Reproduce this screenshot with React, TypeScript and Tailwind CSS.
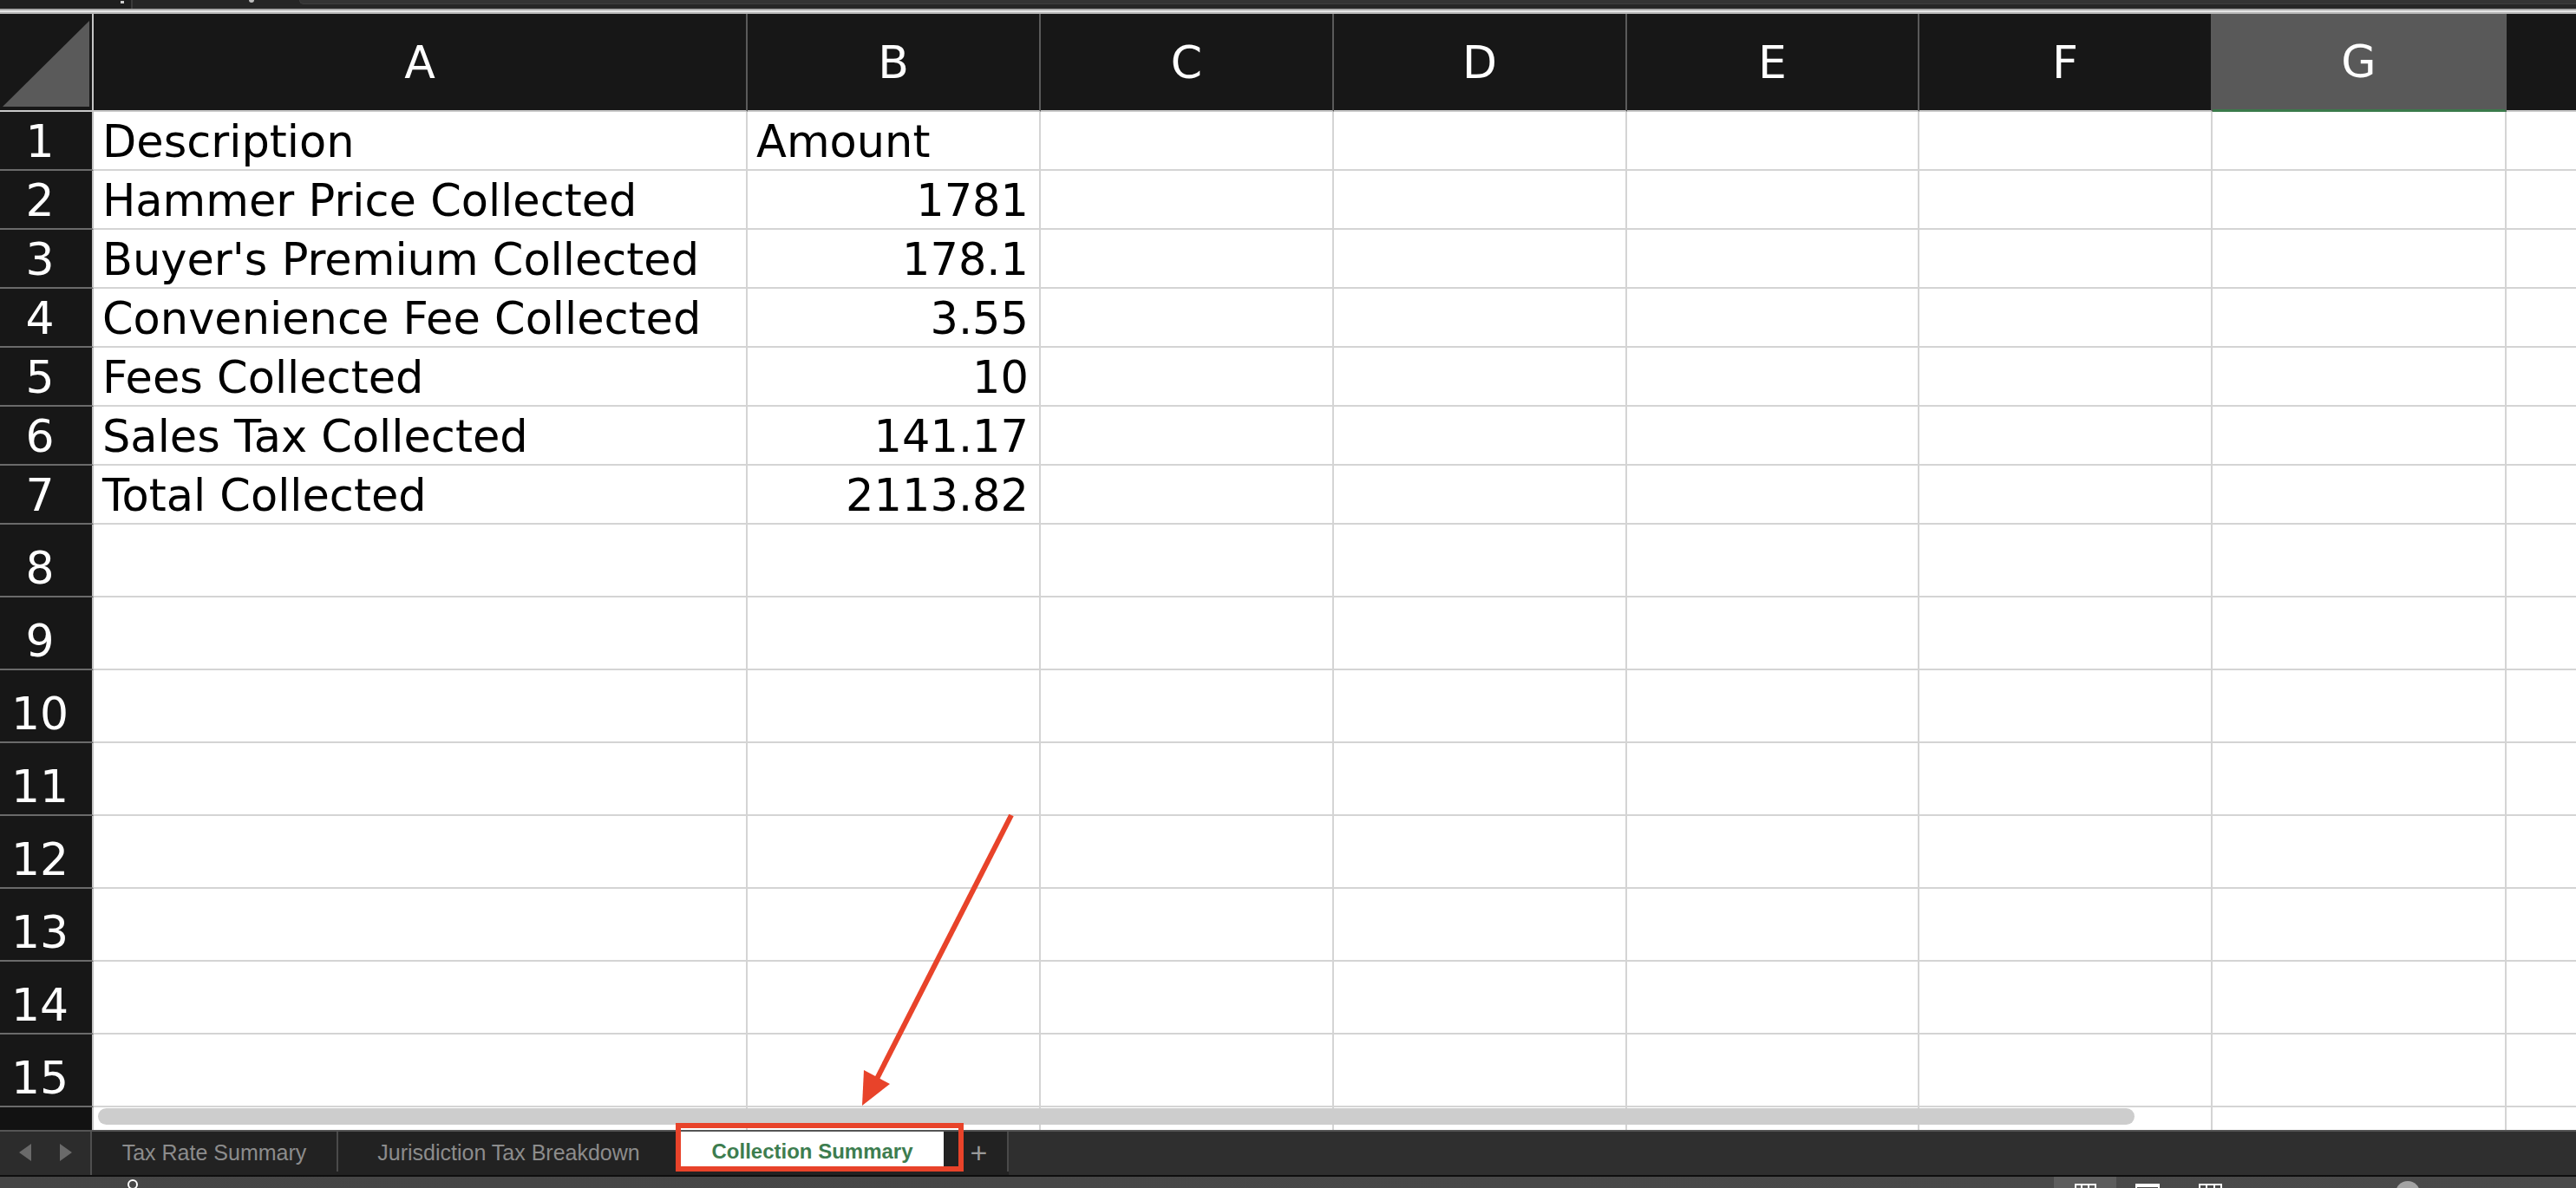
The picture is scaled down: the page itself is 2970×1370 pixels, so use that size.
import React from "react";

// column template: row header, A, B, C, D, E, F, G, H (H runs off the edge)
const GRID = "grid grid-cols-[108px_754px_338px_338px_338px_337px_338px_339px_338px]";
const LETTERS = ["A", "B", "C", "D", "E", "F", "G", ""];

const data: [string, string][] = [
  ["Description", "Amount"],
  ["Hammer Price Collected", "1781"],
  ["Buyer's Premium Collected", "178.1"],
  ["Convenience Fee Collected", "3.55"],
  ["Fees Collected", "10"],
  ["Sales Tax Collected", "141.17"],
  ["Total Collected", "2113.82"],
];

const cellFont = "font-['DejaVu_Sans','Verdana',sans-serif] leading-none";

function TopStrip() {
  return (
    <div className="flex flex-col">
      <div className="h-[10px] flex bg-[#262626]">
        <div className="w-[153px] h-full bg-[#1f1f1f] border-r-2 border-[#3a3a3a] flex justify-end pr-[8px]">
          <div className="w-[4px] h-[3px] bg-[#cfcfcf] mt-[1px]" />
        </div>
        <div className="w-[192px] h-full flex items-start pl-[134px]">
          <div className="w-[6px] h-[3px] bg-[#bdbdbd] rounded-b" />
        </div>
        <div className="flex-1 h-[5px] bg-[#343434] rounded-bl-[6px] border-b border-l border-[#3f3f3f]" />
      </div>
      <div className="h-[6px] bg-[#e6e6e6] border-t-2 border-b-2 border-t-[#a8a8a8] border-b-[#b8b8b8]" />
    </div>
  );
}

function HeaderRow() {
  return (
    <div className={GRID}>
      <div className="h-[113px] bg-[#171717] border-r-2 border-r-[#c4c4c4] border-b-2 border-b-[#c8c8c8] relative">
        <svg className="absolute inset-0" width="106" height="111" viewBox="0 0 106 111">
          <polygon points="3,107 103,8 103,107" fill="#5a5a5a" />
        </svg>
      </div>
      {LETTERS.map((l, i) => {
        const sel = l === "G";
        return (
          <div
            key={i}
            className={
              sel
                ? `h-[113px] bg-[#595959] border-r-2 border-r-[#5a5a5a] border-b-[3px] border-b-[#3b7a4b] flex items-center justify-center text-white text-[52px] ${cellFont}`
                : `h-[113px] bg-[#171717] border-r-2 border-r-[#5a5a5a] border-b-2 border-b-[#c8c8c8] flex items-center justify-center text-white text-[52px] ${cellFont}`
            }
          >
            {l}
          </div>
        );
      })}
    </div>
  );
}

function SheetRow({ n, a, b, tall }: { n: number; a?: string; b?: string; tall?: boolean }) {
  const h = tall ? "h-[84px] pb-[6px]" : "h-[68px] pb-[6px]";
  const numeric = b !== undefined && /^[\d.]+$/.test(b);
  return (
    <div className={GRID}>
      <div className={`${h} bg-[#171717] border-r-2 border-r-[#c4c4c4] border-b-2 border-b-[#6a6a6a] flex items-end justify-center pr-[14px] text-white text-[52px] ${cellFont}`}>
        {n}
      </div>
      <div className={`${h} border-r-2 border-b-2 border-[#d4d4d4] flex items-end pl-[10px] text-black text-[51px] whitespace-nowrap ${cellFont}`}>
        {a}
      </div>
      <div
        className={`${h} border-r-2 border-b-2 border-[#d4d4d4] flex items-end text-black text-[51px] whitespace-nowrap ${cellFont} ${
          numeric ? "justify-end pr-[12px]" : "pl-[10px]"
        }`}
      >
        {b}
      </div>
      {[0, 1, 2, 3, 4, 5].map((i) => (
        <div key={i} className={`${h} border-r-2 border-b-2 border-[#d4d4d4]`} />
      ))}
    </div>
  );
}

function ScrollTrack() {
  return (
    <div className={`${GRID} relative`}>
      <div className="h-[26px] bg-[#121212] border-r-2 border-r-[#c4c4c4]" />
      {LETTERS.map((l, i) => (
        <div key={i} className="h-[26px] border-r-2 border-[#d4d4d4]" />
      ))}
      <div className="absolute left-[113px] top-[1px] w-[2348px] h-[19px] rounded-full bg-[#cdcdcd]" />
    </div>
  );
}

function TabBar() {
  const tabFont = "font-['Liberation_Sans','Arial',sans-serif] whitespace-nowrap";
  return (
    <div className="h-[52px] flex border-t-2 border-[#555555] bg-[#222222]">
      <div className="w-[106px] h-full bg-[#2c2c2c] border-r-2 border-[#4f4f4f] flex items-center justify-center gap-[33px] pb-[2px]">
        <svg width="14" height="20" viewBox="0 0 14 20">
          <polygon points="0,10 14,0 14,20" fill="#6a6a6a" />
        </svg>
        <svg width="14" height="20" viewBox="0 0 14 20">
          <polygon points="14,10 0,0 0,20" fill="#6a6a6a" />
        </svg>
      </div>
      <div className={`w-[284px] h-[46px] pt-[3px] border-r-2 border-[#4a4a4a] flex items-center justify-center text-[#8c8c8c] text-[25px] ${tabFont}`}>
        Tax Rate Summary
      </div>
      <div className={`w-[393px] h-[46px] pt-[3px] flex items-center justify-center text-[#8c8c8c] text-[25px] ${tabFont}`}>
        Jurisdiction Tax Breakdown
      </div>
      <div className={`ml-[2px] w-[303px] h-[42px] pt-[4px] bg-white flex items-center justify-center text-[#3d7d4f] font-bold text-[24px] ${tabFont}`}>
        Collection Summary
      </div>
      <div className="w-[75px] h-[46px] pl-[8px] pt-[2px] border-r-2 border-[#4a4a4a] flex items-center justify-center text-[#9a9a9a] text-[34px] font-['Liberation_Sans',sans-serif]">
        +
      </div>
      <div className="flex-1 h-full bg-[#2f2f2f]" />
    </div>
  );
}

function StatusBar() {
  return (
    <div className="h-[15px] border-t-2 border-[#0e0e0e] bg-gradient-to-r from-[#454545] to-[#4a4a4a] flex overflow-hidden">
      <div className="w-[143px]" />
      <div className="w-[20px] h-full flex justify-center pt-[3px]">
        <div className="w-[12px] h-[12px] rounded-full border-2 border-white" />
      </div>
      <div className="w-[2205px]" />
      <div className="w-[72px] h-full bg-[#5d5d5d] flex justify-center pt-[8px]">
        <div className="w-[25px] h-[10px] border-2 border-white border-b-0 flex justify-evenly">
          <div className="w-[2px] h-full bg-white" />
          <div className="w-[2px] h-full bg-white" />
        </div>
      </div>
      <div className="w-[22px]" />
      <div className="w-[28px] h-full pt-[8px]">
        <div className="w-[28px] h-[10px] border-2 border-white border-b-0 border-t-[4px]" />
      </div>
      <div className="w-[45px]" />
      <div className="w-[27px] h-full pt-[8px]">
        <div className="w-[27px] h-[10px] border-2 border-white border-b-0 flex justify-evenly">
          <div className="w-[2px] h-full bg-white" />
          <div className="w-[2px] h-full bg-white" />
        </div>
      </div>
      <div className="w-[200px]" />
      <div className="w-[28px] h-full pt-[5px]">
        <div className="w-[28px] h-[28px] rounded-full bg-[#a3a3a3]" />
      </div>
      <div className="flex-1" />
    </div>
  );
}

export default function App() {
  return (
    <div className="relative w-[2970px] h-[1370px] overflow-hidden bg-white flex flex-col">
      <TopStrip />
      <HeaderRow />
      {data.map(([a, b], i) => (
        <SheetRow key={i} n={i + 1} a={a} b={b} />
      ))}
      {[8, 9, 10, 11, 12, 13, 14, 15].map((n) => (
        <SheetRow key={n} n={n} tall />
      ))}
      <ScrollTrack />
      <TabBar />
      <StatusBar />

      {/* annotation: red box round the active tab and the arrow pointing at it */}
      <div className="absolute left-[779px] top-[1295px] w-[332px] h-[56px] border-[6px] border-[#e8432a] pointer-events-none" />
      <svg className="absolute left-0 top-0 pointer-events-none" width="2970" height="1370" viewBox="0 0 2970 1370">
        <line x1="1166" y1="940" x2="1011" y2="1244" stroke="#e8432a" strokeWidth="6" />
        <polygon points="994,1275 1026,1250 996,1234" fill="#e8432a" />
      </svg>
    </div>
  );
}
